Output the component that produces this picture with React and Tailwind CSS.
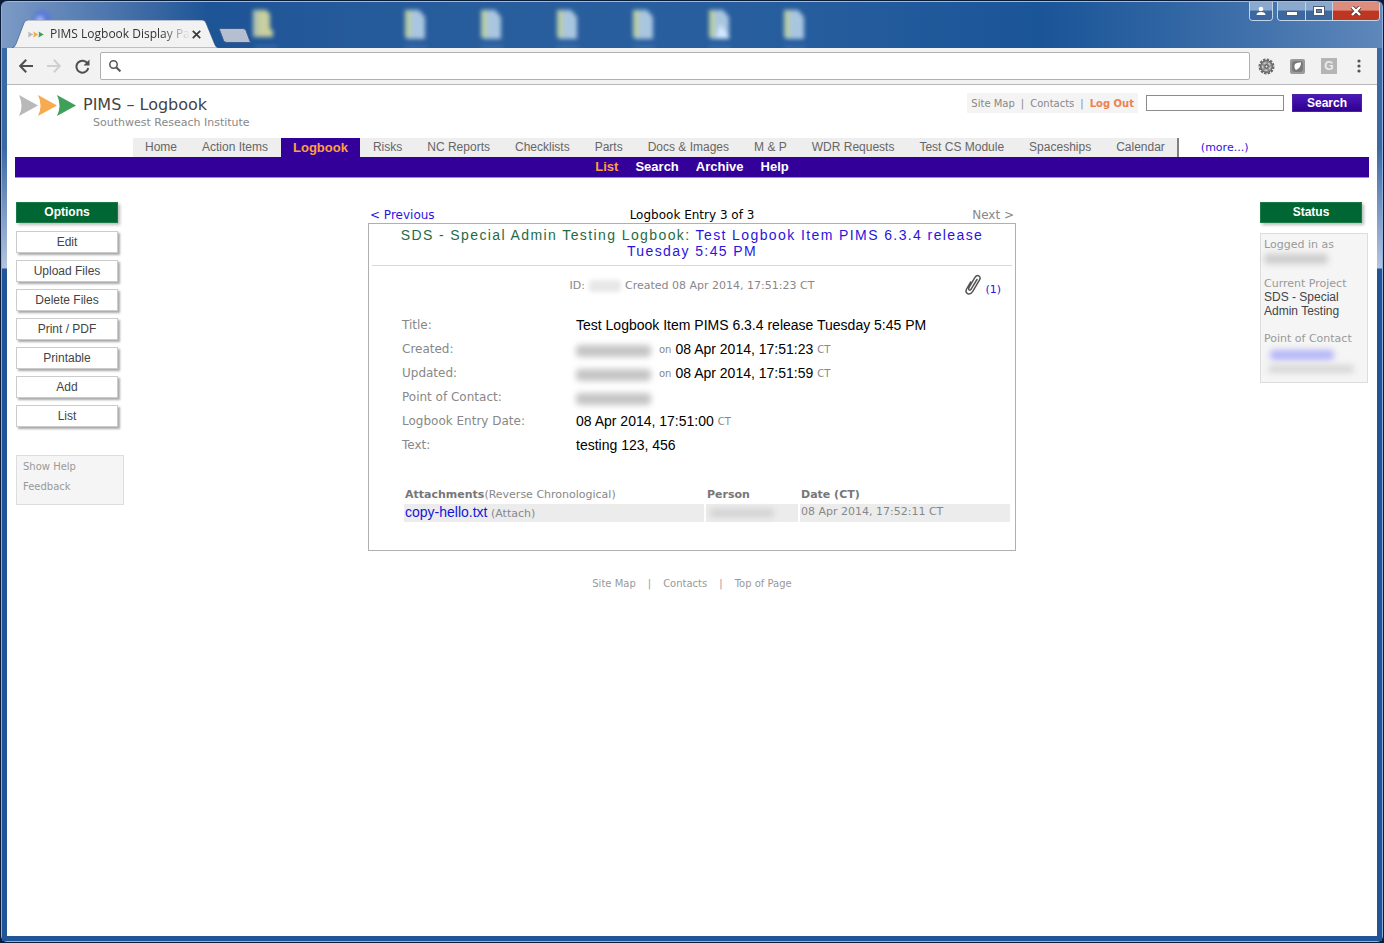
import React, { useState } from 'react';
import clsx from 'clsx';

const NAV_ITEMS = [
    'Home', 'Action Items', 'Logbook', 'Risks', 'NC Reports', 'Checklists', 'Parts',
    'Docs & Images', 'M & P', 'WDR Requests', 'Test CS Module', 'Spaceships', 'Calendar',
];
const SUB_ITEMS = ['List', 'Search', 'Archive', 'Help'];
const OPTIONS = ['Edit', 'Upload Files', 'Delete Files', 'Print / PDF', 'Printable', 'Add', 'List'];

const VERDANA = "font-['DejaVu_Sans',sans-serif]";
const ARIAL = "font-['Liberation_Sans',Arial,sans-serif]";

// Three arrow heads, used in the tab and in the page header
function Arrows({ className }) {
    return (
        <svg viewBox="0 0 58 23" className={className} aria-hidden="true">
            <path d="M0 1 L19 11.5 L0 22 Q5 11.5 0 1Z" fill="#b9b9b9" />
            <path d="M19 1 L38 11.5 L19 22 Q24 11.5 19 1Z" fill="#f7ab4f" />
            <path d="M38 1 L57 11.5 L38 22 Q43 11.5 38 1Z" fill="#3fa05a" />
        </svg>
    );
}

// Name that is blurred out for privacy
function Redacted({ className }) {
    return <span className={clsx('inline-block rounded-sm align-middle', className)} />;
}

// --- WINDOW FRAME ---
function DesktopIcons() {
    const xs = [403, 479, 555, 631, 707, 782];
    return (
        <svg className="absolute left-0 top-0 h-12 w-full blur-[2px]" aria-hidden="true">
            <circle cx="40" cy="17" r="9" fill="#5a78d8" />
            <circle cx="38" cy="18" r="4" fill="#a9b6ee" />
            <path d="M251 8h13l4 4v14l3 3v6h-20z" fill="#c9cf9e" />
            <path d="M251 8h6v27h-6z" fill="#b3c4ae" />
            <path d="M253 45h22" stroke="#4576b5" strokeWidth="2" />
            {xs.map((x) => (
                <g key={x}>
                    <path d={`M${x} 8h14l6 7v22h-18l-2-3z`} fill="#a9c6e0" />
                    <path d={`M${x} 8h6v27h-6z`} fill="#b8cda9" />
                    <path d={`M${x} 45h22`} stroke="#4576b5" strokeWidth="2" />
                </g>
            ))}
            <path d="M714 36 L718 22 L728 36Z" fill="#d6eaff" />
        </svg>
    );
}

function WindowButtons() {
    const blue = 'bg-linear-to-b from-[#8ba9cd] from-45% to-[#3c689f] to-50%';
    const base = 'flex h-full items-center justify-center';
    return (
        <div className="absolute right-0.5 top-0 flex h-[19px] gap-1">
            <div className="overflow-hidden rounded-b border border-t-0 border-[#c3d3e8]">
                <button type="button" aria-label="Profile" className={clsx(base, blue, 'w-[22px]')}>
                    <svg width="10" height="10" viewBox="0 0 10 10" fill="#fff" aria-hidden="true">
                        <circle cx="5" cy="3" r="2.3" />
                        <path d="M0.5 9 Q0.5 6 5 6 Q9.5 6 9.5 9Z" />
                    </svg>
                </button>
            </div>
            <div className="flex overflow-hidden rounded-b border border-t-0 border-[#c3d3e8]">
                <button type="button" aria-label="Minimize" className={clsx(base, blue, 'w-7 border-r border-[#c3d3e8]')}>
                    <svg width="12" height="5" viewBox="0 0 12 5" className="mt-1" aria-hidden="true">
                        <rect x="0.5" y="0.5" width="11" height="4" fill="#fff" stroke="#4d5d75" />
                    </svg>
                </button>
                <button type="button" aria-label="Maximize" className={clsx(base, blue, 'w-[27px] border-r border-[#c3d3e8]')}>
                    <svg width="12" height="10" viewBox="0 0 12 10" aria-hidden="true">
                        <rect x="0.5" y="0.5" width="11" height="9" fill="#fff" stroke="#4d5d75" />
                        <rect x="3.5" y="3.5" width="5" height="3" fill="#5d82b3" stroke="#4d5d75" />
                    </svg>
                </button>
                <button type="button" aria-label="Close" className={clsx(base, 'w-[46px] bg-linear-to-b from-[#dd8d7e] from-45% to-[#bd3622] to-50%')}>
                    <svg width="12" height="10" viewBox="0 0 12 10" aria-hidden="true">
                        <path d="M2 1 L10 9 M10 1 L2 9" stroke="#5b3a3a" strokeWidth="4" />
                        <path d="M2 1 L10 9 M10 1 L2 9" stroke="#fff" strokeWidth="2.4" />
                    </svg>
                </button>
            </div>
        </div>
    );
}

function TitleBar() {
    return (
        <div className="relative flex h-[47px] items-end overflow-hidden rounded-t-md border-t border-[#9fb9da] bg-linear-to-r from-[#7c9ac5] via-[#1d5496] via-15% to-[#5f88bb]">
            <div className="absolute inset-0 bg-linear-to-r from-transparent from-20% via-[#1a5598] via-75% to-[#1a5598]/0" />
            <DesktopIcons />
            <div className="relative ml-2.5 flex h-7 w-52 items-center pl-4 pr-[19px]">
                <svg className="absolute inset-0 h-full w-full" viewBox="0 0 208 28" preserveAspectRatio="none" aria-hidden="true">
                    <path d="M0 28 Q3 27 4 24 L12 3 Q13 0 16 0 H190 Q193 0 194 3 L203 25 Q204 28 208 28Z" fill="#f2f2f2" stroke="#2a4d7d" strokeWidth="0.6" />
                </svg>
                <Arrows className="relative h-[7px] w-4 shrink-0" />
                <span className="relative ml-1.5 whitespace-nowrap font-['Open_Sans',sans-serif] text-xs text-[#333] [mask-image:linear-gradient(to_right,black_80%,transparent)]">
                    PIMS Logbook Display Pa
                </span>
                <button type="button" aria-label="Close tab" className="relative ml-auto">
                    <svg width="9" height="9" viewBox="0 0 9 9" stroke="#3c3c3c" strokeWidth="1.8" aria-hidden="true">
                        <path d="M0.8 0.8 L8.2 8.2 M8.2 0.8 L0.8 8.2" />
                    </svg>
                </button>
            </div>
            <button type="button" aria-label="New tab" className="relative -ml-0.5 mb-1">
                <svg width="34" height="17" viewBox="0 0 34 17" aria-hidden="true">
                    <path d="M1 1.5 H25 Q27 1.5 28 3.5 L32.5 15.5 H9 Q6.5 15.5 5.5 13.5Z" fill="#b4c0d2" stroke="#3b5d8d" />
                </svg>
            </button>
            <WindowButtons />
        </div>
    );
}

function Toolbar() {
    return (
        <div className="flex h-[37px] items-center border-b border-[#b8b8b8] bg-[#f2f2f2] pl-3 pr-4">
            <button type="button" aria-label="Back">
                <svg width="14" height="14" viewBox="0 0 14 14" fill="none" stroke="#4f4f4f" strokeWidth="2" aria-hidden="true">
                    <path d="M14 7 H1.5 M7.2 0.8 L1.2 7 L7.2 13.2" />
                </svg>
            </button>
            <button type="button" aria-label="Forward" className="ml-3.5">
                <svg width="14" height="14" viewBox="0 0 14 14" fill="none" stroke="#d0d0d0" strokeWidth="2" aria-hidden="true">
                    <path d="M0 7 H12.5 M6.8 0.8 L12.8 7 L6.8 13.2" />
                </svg>
            </button>
            <button type="button" aria-label="Reload" className="ml-3.5">
                <svg width="15" height="15" viewBox="0 0 15 15" fill="none" aria-hidden="true">
                    <path d="M12.6 4.6 A6 6 0 1 0 13.3 9" stroke="#4f4f4f" strokeWidth="2" />
                    <path d="M14.5 0.5 V6.5 H8.5Z" fill="#4f4f4f" />
                </svg>
            </button>
            <div className="ml-2.5 flex h-7 flex-1 items-center rounded-xs border border-[#b0b0b0] bg-white pl-2">
                <svg width="12" height="12" viewBox="0 0 12 12" fill="none" stroke="#555" aria-hidden="true">
                    <circle cx="4.5" cy="4.5" r="3.7" strokeWidth="1.5" />
                    <path d="M7.2 7.2 L11.4 11.4" strokeWidth="2" />
                </svg>
                <input type="text" aria-label="Address" className="ml-2 min-w-0 flex-1 bg-transparent text-sm outline-none" />
            </div>
            <button type="button" aria-label="Settings extension" className="ml-2">
                <svg width="17" height="17" viewBox="0 0 17 17" aria-hidden="true">
                    <circle cx="8.5" cy="8.5" r="7" fill="none" stroke="#6a6a6a" strokeWidth="2" strokeDasharray="2.4 1.26" />
                    <circle cx="8.5" cy="8.5" r="6" fill="#8c8c8c" stroke="#5f5f5f" />
                    <circle cx="8.5" cy="8.5" r="3.8" fill="none" stroke="#c9c9c9" strokeWidth="1.4" strokeDasharray="3 1.77" />
                    <circle cx="8.5" cy="8.5" r="1.6" fill="#e0e0e0" stroke="#4a4a4a" />
                </svg>
            </button>
            <button type="button" aria-label="Shield extension" className="ml-3.5">
                <svg width="17" height="17" viewBox="0 0 17 17" aria-hidden="true">
                    <rect x="1" y="1" width="15" height="15" rx="2" fill="#9a9a9a" />
                    <rect x="3" y="3" width="11" height="11" rx="3" fill="#7a7a7a" />
                    <path d="M6 6 Q8 4 12 4.5 Q12 10 7 12 Q4.5 9.5 6 6Z" fill="#fff" />
                </svg>
            </button>
            <button type="button" aria-label="G extension" className="ml-[15px] flex size-4 items-center justify-center bg-[#b5b5b5] font-['Liberation_Sans',sans-serif] text-xs leading-4 font-bold text-[#ececec]">
                G
            </button>
            <button type="button" aria-label="Menu" className="ml-5">
                <svg width="4" height="14" viewBox="0 0 4 14" fill="#555" aria-hidden="true">
                    <circle cx="2" cy="2" r="1.6" />
                    <circle cx="2" cy="7" r="1.6" />
                    <circle cx="2" cy="12" r="1.6" />
                </svg>
            </button>
        </div>
    );
}

// --- PAGE HEADER ---
function Header() {
    const [query, setQuery] = useState('');
    return (
        <header className={clsx('flex h-[53px] items-start justify-between pl-1 pr-[7px] pt-2', VERDANA)}>
            <div className="flex">
                <Arrows className="mt-px h-[23px] w-[58px]" />
                <div className="ml-1.5">
                    <h1 className="text-base leading-6 text-[#444]">PIMS – Logbook</h1>
                    <p className="ml-2.5 text-[11px] leading-3 text-[#888]">Southwest Reseach Institute</p>
                </div>
            </div>
            <form className="flex items-center" onSubmit={(e) => e.preventDefault()}>
                <div className="flex h-5 items-center gap-1.5 bg-[#f4f4f4] px-1 text-[10px] text-[#888]">
                    <a href="#sitemap">Site Map</a>
                    <span>|</span>
                    <a href="#contacts">Contacts</a>
                    <span>|</span>
                    <a href="#logout" className="font-bold text-[#f08050]">Log Out</a>
                </div>
                <input
                    type="text"
                    aria-label="Search text"
                    value={query}
                    onChange={(e) => setQuery(e.target.value)}
                    className="ml-2 h-4 w-[138px] border border-[#8c8c8c] bg-white px-1 text-[10px] outline-none"
                />
                <button type="submit" className={clsx('ml-2 h-[18px] w-[70px] border border-[#4a22a8] bg-linear-to-b from-[#4b18b8] to-[#2f0090] text-xs leading-4 font-bold text-white', ARIAL)}>
                    Search
                </button>
            </form>
        </header>
    );
}

function Nav() {
    return (
        <nav className={ARIAL}>
            <div className="flex h-[19px] items-stretch pl-[118px] text-xs leading-[19px] whitespace-nowrap text-[#666]">
                <div className="flex gap-px border-r-2 border-[#808080] bg-[#eeeeee]">
                    {NAV_ITEMS.map((item) => (
                        <a
                            key={item}
                            href="#nav"
                            className={clsx('px-3', item === 'Logbook' && 'bg-[#330099] text-[13px] font-bold text-[#ffa040]')}
                        >
                            {item}
                        </a>
                    ))}
                </div>
                <a href="#more" className={clsx('ml-[22px] text-[11px] text-[#2a14e0]', VERDANA)}>(more...)</a>
            </div>
            <div className="flex h-[21px] justify-center gap-[17px] border-b border-[#9a8fae] bg-[#330099] text-[13px] leading-5 font-bold text-white">
                {SUB_ITEMS.map((item) => (
                    <a key={item} href="#sub" className={item === 'List' ? 'text-[#ffa040]' : undefined}>{item}</a>
                ))}
            </div>
        </nav>
    );
}

function PanelHeading({ children }) {
    return (
        <h2 className={clsx('h-[21px] w-[102px] border border-[#1c7a48] bg-[#006633] text-center text-xs leading-[19px] font-bold text-white shadow-[2px_2px_3px_#bbb]', ARIAL)}>
            {children}
        </h2>
    );
}

function OptionsPanel() {
    return (
        <aside className="w-[108px]">
            <PanelHeading>Options</PanelHeading>
            <ul className={clsx('mt-2 space-y-[7px]', ARIAL)}>
                {OPTIONS.map((option) => (
                    <li key={option}>
                        <button type="button" className="block h-[22px] w-[102px] border border-[#ccc] bg-white text-xs leading-5 text-[#444] shadow-[2px_2px_2px_#aaa]">
                            {option}
                        </button>
                    </li>
                ))}
            </ul>
            <div className={clsx('mt-7 flex h-[50px] flex-col border border-[#ddd] bg-[#f5f5f5] px-1.5 pt-px text-[10px] leading-5 text-[#999]', VERDANA)}>
                <a href="#help">Show Help</a>
                <a href="#feedback">Feedback</a>
            </div>
        </aside>
    );
}

function StatusPanel() {
    return (
        <aside className="w-[108px]">
            <PanelHeading>Status</PanelHeading>
            <div className={clsx('mt-2.5 h-[150px] border border-[#ddd] bg-[#f5f5f5] px-[3px] pt-1 text-[11px] leading-[14px] text-[#999]', VERDANA)}>
                <p>Logged in as</p>
                <Redacted className="block h-2.5 w-16 bg-[#ccc] blur-[3px]" />
                <p className="mt-3 leading-3">Current Project</p>
                <p className={clsx('text-xs leading-[14px] text-[#444]', ARIAL)}>SDS - Special Admin Testing</p>
                <p className="mt-3.5">Point of Contact</p>
                <Redacted className="ml-1.5 mt-1 block h-2.5 w-16 bg-[#b4b4f8] blur-[3px]" />
                <Redacted className="ml-1 mt-1 block h-2 w-[86px] bg-[#d6d6d6] blur-[3px]" />
            </div>
        </aside>
    );
}

// --- LOGBOOK ENTRY ---
function Field({ label, children }) {
    return (
        <div className="flex h-6 items-center">
            <dt className={clsx('w-[174px] text-xs text-[#888]', VERDANA)}>{label}</dt>
            <dd className="flex items-center gap-1 text-black">{children}</dd>
        </div>
    );
}

function Small({ children }) {
    return <span className={clsx('pt-0.5 text-[10px] text-[#888]', VERDANA)}>{children}</span>;
}

function PersonBlur() {
    return <Redacted className="mr-1 h-3 w-[75px] translate-y-0.5 bg-[#c4c4c4] blur-[3px]" />;
}

function Attachments() {
    return (
        <table className={clsx('mx-[33px] mt-7 w-[610px] table-fixed border-separate border-spacing-x-0.5 border-spacing-y-0 text-left text-[11px] text-[#888]', VERDANA)}>
            <colgroup>
                <col className="w-[300px]" />
                <col className="w-[92px]" />
                <col />
            </colgroup>
            <thead>
                <tr className="h-[19px]">
                    <th className="p-0 pl-px"><span className="text-[#777]">Attachments</span><span className="font-normal">(Reverse Chronological)</span></th>
                    <th className="p-0 pl-px text-[#777]">Person</th>
                    <th className="p-0 pl-px text-[#777]">Date (CT)</th>
                </tr>
            </thead>
            <tbody>
                <tr className="h-[18px] leading-4">
                    <td className="bg-[#ececec] p-0 pl-px">
                        <a href="#file" className={clsx('text-sm leading-4 text-[#1414d8]', ARIAL)}>copy-hello.txt</a> (Attach)
                    </td>
                    <td className="bg-[#ececec] p-0">
                        <Redacted className="ml-1 h-2 w-16 bg-[#d0d0d0] blur-[3px]" />
                    </td>
                    <td className="bg-[#ececec] p-0 pb-0.5 pl-px">08 Apr 2014, 17:52:11 CT</td>
                </tr>
            </tbody>
        </table>
    );
}

function LogbookEntry() {
    return (
        <main className={clsx('w-full max-w-[648px]', ARIAL)}>
            <div className={clsx('flex h-[21px] items-center justify-between px-0.5 pt-1 text-xs text-black', VERDANA)}>
                <a href="#previous" className="flex-1 text-[#2a14e0]">&lt; Previous</a>
                <span>Logbook Entry 3 of 3</span>
                <span className="flex-1 text-right text-[#888]">Next &gt;</span>
            </div>
            <section className="h-[328px] border border-[#b0b0b0] text-sm">
                <h2 className="mx-[3px] border-b border-[#d8d8d8] px-5 pt-[3px] pb-1.5 text-center leading-4 tracking-widest text-[#1f6b45]">
                    SDS - Special Admin Testing Logbook: <a href="#entry" className="text-[#2a14e0]">Test Logbook Item PIMS 6.3.4 release Tuesday 5:45 PM</a>
                </h2>
                <div className={clsx('relative mt-2 flex h-6 items-center justify-center text-[11px] text-[#888]', VERDANA)}>
                    <span>ID:</span>
                    <Redacted className="mx-1 h-3 w-8 bg-[#e8e8e8] blur-[2px]" />
                    <span>Created 08 Apr 2014, 17:51:23 CT</span>
                    <a href="#attachments" className="absolute right-3.5 top-0 flex items-end gap-1 leading-3 text-[#2a14e0]">
                        <svg width="16" height="22" viewBox="0 0 16 22" fill="none" stroke="#555" strokeWidth="1.5" strokeLinecap="round" aria-hidden="true">
                            <path d="M12 5.5 L6.3 14.8 Q5.2 16.6 4.1 15.9 Q3.1 15.2 4.1 13.4 L9.8 3.6 Q11.7 0.7 14 2 Q16 3.4 14.4 6.2 L7.6 17.6 Q5.2 21.2 2.5 19.6 Q0 18 1.6 15 L5.6 8" />
                        </svg>
                        (1)
                    </a>
                </div>
                <dl className="mt-[15px] pl-[33px]">
                    <Field label="Title:">Test Logbook Item PIMS 6.3.4 release Tuesday 5:45 PM</Field>
                    <Field label="Created:"><PersonBlur /><Small>on</Small>08 Apr 2014, 17:51:23 <Small>CT</Small></Field>
                    <Field label="Updated:"><PersonBlur /><Small>on</Small>08 Apr 2014, 17:51:59 <Small>CT</Small></Field>
                    <Field label="Point of Contact:"><PersonBlur /></Field>
                    <Field label="Logbook Entry Date:">08 Apr 2014, 17:51:00 <Small>CT</Small></Field>
                    <Field label="Text:">testing 123, 456</Field>
                </dl>
                <Attachments />
            </section>
            <footer className={clsx('mt-[25px] flex justify-center gap-3 text-[10px] leading-4 text-[#999]', VERDANA)}>
                <a href="#sitemap">Site Map</a>
                <span>|</span>
                <a href="#contacts">Contacts</a>
                <span>|</span>
                <a href="#top">Top of Page</a>
            </footer>
        </main>
    );
}

export default function App() {
    return (
        <div className="flex min-h-screen flex-col bg-[#0a1c38] p-px">
            <div className="flex flex-1 flex-col rounded-md border border-t-0 border-[#8fb0d8] bg-[#1f5596]">
                <TitleBar />
                <div className="flex flex-1 flex-col bg-[linear-gradient(to_bottom,#3a6aa6_0px,#3a6aa6_100px,#b4c4e0_220px,#1f5596_221px)] px-[5px] pb-[5px]">
                    <Toolbar />
                    <div className="flex-1 bg-white px-2">
                        <Header />
                        <Nav />
                        <div className="flex justify-between px-px pt-6">
                            <OptionsPanel />
                            <LogbookEntry />
                            <StatusPanel />
                        </div>
                    </div>
                </div>
            </div>
        </div>
    );
}
